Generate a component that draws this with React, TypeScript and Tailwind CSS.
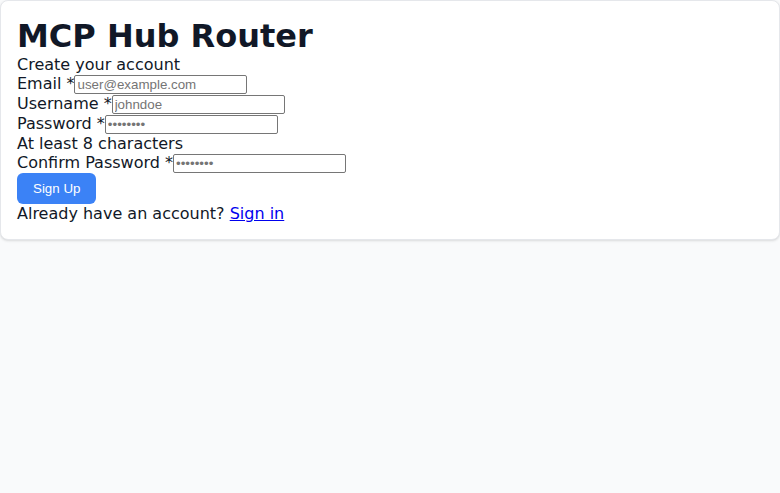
export default function App() {
  const inputCls =
    "w-[173px] h-[19px] border border-[#767676] rounded-[2px] bg-white px-[2px] text-[13.33px] leading-[15px] text-[#111827] font-['Liberation_Sans',Arial,sans-serif] placeholder:text-[#757575] outline-none";

  return (
    <div className="min-h-screen bg-[#f9fafb] font-['DejaVu_Sans',sans-serif] text-[#111827]">
      <div className="bg-white border border-[#e5e7eb] rounded-lg shadow-sm px-4 pt-4 pb-4">
        <h1 className="text-[32px] font-bold leading-[38px] text-[#111827]">MCP Hub Router</h1>

        <form className="flex flex-col items-start text-base" onSubmit={(e) => e.preventDefault()}>
          <p className="leading-[19px]">Create your account</p>

          <div className="flex items-end h-[20px]">
            <label htmlFor="email" className="leading-[20px]">Email *</label>
            <input id="email" type="email" placeholder="user@example.com" className={inputCls} />
          </div>

          <div className="flex items-end h-[20px]">
            <label htmlFor="username" className="leading-[20px]">Username *</label>
            <input id="username" type="text" placeholder="johndoe" className={inputCls} />
          </div>

          <div className="flex items-end h-[20px]">
            <label htmlFor="password" className="leading-[20px]">Password *</label>
            <input id="password" type="password" placeholder="••••••••" className={inputCls} />
          </div>

          <p className="leading-[19px]">At least 8 characters</p>

          <div className="flex items-end h-[20px]">
            <label htmlFor="confirm" className="leading-[20px]">Confirm Password *</label>
            <input id="confirm" type="password" placeholder="••••••••" className={inputCls} />
          </div>

          <button
            type="submit"
            className="h-[31px] px-4 rounded-md bg-[#3b82f6] text-white text-[13.33px] leading-[15px] font-['Liberation_Sans',Arial,sans-serif]"
          >
            Sign Up
          </button>

          <p className="leading-[19px]">
            Already have an account?{" "}
            <a href="#" className="text-[#0000ee] underline">Sign in</a>
          </p>
        </form>
      </div>
    </div>
  );
}
